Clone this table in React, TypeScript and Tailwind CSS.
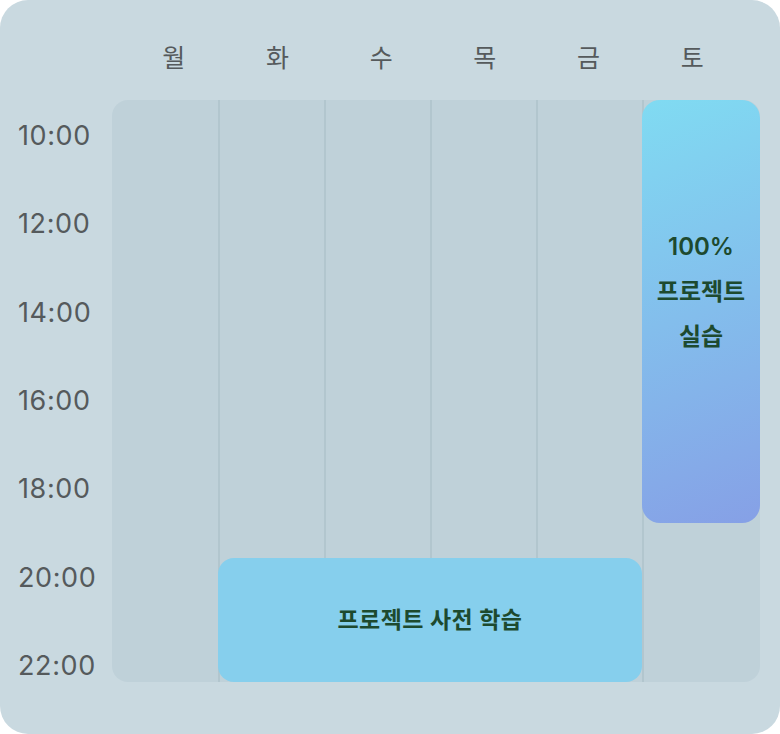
const days = ["월", "화", "수", "목", "금", "토"];
const times = ["10:00", "12:00", "14:00", "16:00", "18:00", "20:00", "22:00"];

const font = { fontFamily: '"Inter", "Noto Sans CJK KR", sans-serif' };

export default function App() {
  return (
    <div className="w-[780px] h-[734px] bg-white" style={font}>
      <div className="w-full h-full rounded-[28px] bg-[#c9d9e0] flex flex-col">
        {/* day header */}
        <div className="h-[100px] pt-[42px] pl-[122px]">
          <div className="grid grid-cols-6 w-[622px]">
            {days.map((d) => (
              <div key={d} className="text-center text-[25px] leading-[32px] text-[#555a5c]">
                {d}
              </div>
            ))}
          </div>
        </div>

        <div className="flex">
          {/* time labels */}
          <div className="w-[112px] pt-[18px] h-[584px] flex flex-col justify-between pl-[18px]">
            {times.map((t) => (
              <div key={t} className="text-[27px] leading-[36px] text-[#555a5c] tracking-[0.6px]">
                {t}
              </div>
            ))}
          </div>

          {/* schedule grid */}
          <div className="w-[648px] h-[582px] rounded-2xl bg-[#bfd1d9] overflow-hidden grid grid-cols-[106px_106px_106px_106px_106px_1fr] grid-rows-[423px_35px_124px]">
            {days.map((d, i) => (
              <div
                key={d}
                className={
                  i === 0
                    ? "col-start-1 row-start-1 row-span-3"
                    : i === 1
                    ? "col-start-2 row-start-1 row-span-3 border-l-2 border-[#b2c6ce]"
                    : i === 2
                    ? "col-start-3 row-start-1 row-span-3 border-l-2 border-[#b2c6ce]"
                    : i === 3
                    ? "col-start-4 row-start-1 row-span-3 border-l-2 border-[#b2c6ce]"
                    : i === 4
                    ? "col-start-5 row-start-1 row-span-3 border-l-2 border-[#b2c6ce]"
                    : "col-start-6 row-start-1 row-span-3 border-l-2 border-[#b2c6ce]"
                }
              />
            ))}

            <div className="col-start-6 row-start-1 rounded-[18px] bg-linear-[160deg] from-[#80dbf2] to-[#86a0e6] flex flex-col items-center justify-center text-[24px] leading-[45px] font-semibold text-[#1d4a2f] pb-[40px]">
              <span>100%</span>
              <span>프로젝트</span>
              <span>실습</span>
            </div>

            <div className="col-start-2 col-span-4 row-start-3 rounded-[16px] bg-[#86cfed] flex items-center justify-center text-[23px] tracking-[0.4px] font-semibold text-[#1d4a2f]">
              프로젝트 사전 학습
            </div>
          </div>
        </div>
      </div>
    </div>
  );
}
